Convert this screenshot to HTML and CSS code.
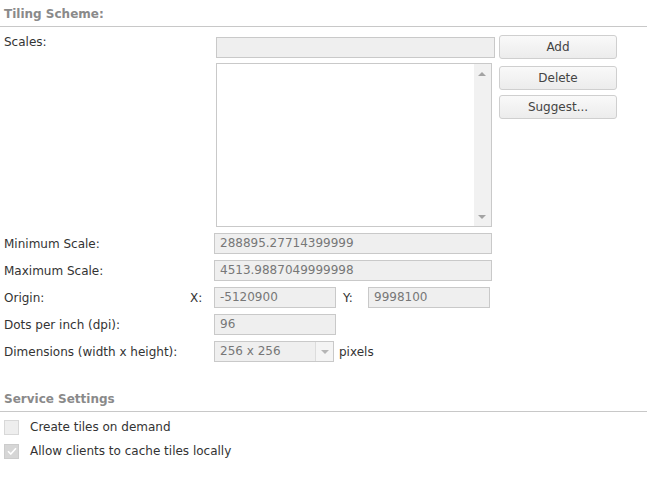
FILE: index.html
```html
<!DOCTYPE html>
<html>
<head>
<meta charset="utf-8">
<link rel="stylesheet" href="styles.css">
</head>
<body>
<div class="panel">
  <div class="section-title">Tiling Scheme:</div>
  <div class="scales-row">
    <div class="label scales-label">Scales:</div>
    <div class="scales-fields">
      <div class="field scale-input"></div>
      <div class="listbox">
        <div class="list-area"></div>
        <div class="scrollbar">
          <span class="arrow up"></span>
          <span class="arrow down"></span>
        </div>
      </div>
    </div>
    <div class="buttons">
      <div class="btn btn-add">Add</div>
      <div class="btn btn-delete">Delete</div>
      <div class="btn btn-suggest">Suggest...</div>
    </div>
  </div>

  <div class="row row-min">
    <div class="label">Minimum Scale:</div>
    <div class="field wide">288895.27714399999</div>
  </div>
  <div class="row">
    <div class="label">Maximum Scale:</div>
    <div class="field wide">4513.9887049999998</div>
  </div>
  <div class="row">
    <div class="label origin-label">Origin:</div>
    <div class="axis">X:</div>
    <div class="field short">-5120900</div>
    <div class="axis axis-y">Y:</div>
    <div class="field short">9998100</div>
  </div>
  <div class="row">
    <div class="label">Dots per inch (dpi):</div>
    <div class="field short">96</div>
  </div>
  <div class="row">
    <div class="label">Dimensions (width x height):</div>
    <div class="select">
      <div class="select-value">256 x 256</div>
      <div class="select-btn"><span class="arrow down"></span></div>
    </div>
    <div class="unit">pixels</div>
  </div>

  <div class="section-title service-title">Service Settings</div>
  <div class="check-row">
    <span class="checkbox"></span>
    <span class="check-label">Create tiles on demand</span>
  </div>
  <div class="check-row">
    <span class="checkbox checked">
      <svg width="10" height="8" viewBox="0 0 10 8"><path d="M1 4.2 L3.8 7 L9 1.2" fill="none" stroke="#ffffff" stroke-width="1.6"/></svg>
    </span>
    <span class="check-label">Allow clients to cache tiles locally</span>
  </div>
</div>
</body>
</html>
```

FILE: styles.css
```css
html, body {
  margin: 0;
  padding: 0;
  background: #ffffff;
}
body {
  font-family: "DejaVu Sans", Verdana, sans-serif;
  font-size: 12px;
  color: #333333;
  width: 647px;
  height: 478px;
  overflow: hidden;
}
.panel {
  display: flex;
  flex-direction: column;
}
.section-title {
  font-weight: bold;
  color: #8a8a8a;
  font-size: 12px;
  padding: 7px 4px 5px 4px;
  border-bottom: 1px solid #c8c8c8;
  line-height: 14px;
}
.service-title {
  margin-top: 23px;
}
.label {
  color: #333333;
  width: 186px;
  padding-left: 4px;
  flex: none;
}
.scales-row {
  display: flex;
  align-items: flex-start;
  margin-top: 8px;
}
.scales-label {
  width: 212px;
  padding-top: 0;
}
.scales-fields {
  display: flex;
  flex-direction: column;
  margin-top: 2px;
  width: 279px;
}
.field {
  box-sizing: border-box;
  height: 21px;
  border: 1px solid #c9c9c9;
  background: #efefef;
  color: #777777;
  font-size: 12px;
  line-height: 19px;
  padding-left: 5px;
  white-space: nowrap;
}
.scale-input {
  width: 279px;
}
.listbox {
  box-sizing: border-box;
  margin-top: 5px;
  width: 276px;
  height: 164px;
  border: 1px solid #c9c9c9;
  background: #ffffff;
  display: flex;
}
.list-area {
  flex: 1;
}
.scrollbar {
  width: 17px;
  background: #f1f1f1;
  position: relative;
}
.arrow {
  display: block;
  width: 0;
  height: 0;
  border-left: 4px solid transparent;
  border-right: 4px solid transparent;
}
.arrow.up {
  border-bottom: 4px solid #a3a3a3;
  position: absolute;
  left: 4px;
  top: 8px;
}
.scrollbar .arrow.down {
  border-top: 4px solid #a3a3a3;
  position: absolute;
  left: 4px;
  bottom: 7px;
}
.buttons {
  display: flex;
  flex-direction: column;
  margin-left: 4px;
}
.btn {
  box-sizing: border-box;
  width: 118px;
  height: 24px;
  border: 1px solid #cfcfcf;
  border-radius: 3px;
  background: linear-gradient(#f9f9f9, #ececec);
  text-align: center;
  line-height: 22px;
  color: #444444;
  font-size: 12px;
}
.btn-delete {
  margin-top: 7px;
}
.btn-suggest {
  margin-top: 5px;
}
.row {
  display: flex;
  align-items: center;
  height: 21px;
  margin-top: 6px;
}
.row-min {
  margin-top: 6px;
}
.row .label {
  width: 210px;
}
.row .origin-label {
  width: 186px;
}
.axis {
  width: 24px;
  flex: none;
}
.axis-y {
  width: 25px;
  margin-left: 7px;
}
.wide {
  width: 278px;
}
.short {
  width: 122px;
}
.select {
  box-sizing: border-box;
  width: 120px;
  height: 21px;
  border: 1px solid #c9c9c9;
  background: #efefef;
  display: flex;
}
.select-value {
  flex: 1;
  color: #777777;
  font-size: 12px;
  line-height: 19px;
  padding-left: 5px;
}
.select-btn {
  width: 17px;
  border-left: 1px solid #dcdcdc;
  background: #f4f4f4;
  display: flex;
  align-items: center;
  justify-content: center;
}
.select-btn .arrow.down {
  border-top: 4px solid #b5b5b5;
}
.unit {
  margin-left: 5px;
  font-size: 12px;
}
.check-row {
  display: flex;
  align-items: center;
  padding-left: 4px;
  height: 16px;
  margin-top: 7px;
}
.check-row + .check-row {
  margin-top: 8px;
}
.checkbox {
  box-sizing: border-box;
  width: 15px;
  height: 15px;
  border: 1px solid #d8d8d8;
  background: #eeeeee;
  display: flex;
  align-items: center;
  justify-content: center;
  flex: none;
}
.checkbox.checked {
  background: #d6d6d6;
  border-color: #cccccc;
}
.check-label {
  margin-left: 11px;
  font-size: 12px;
}
```
